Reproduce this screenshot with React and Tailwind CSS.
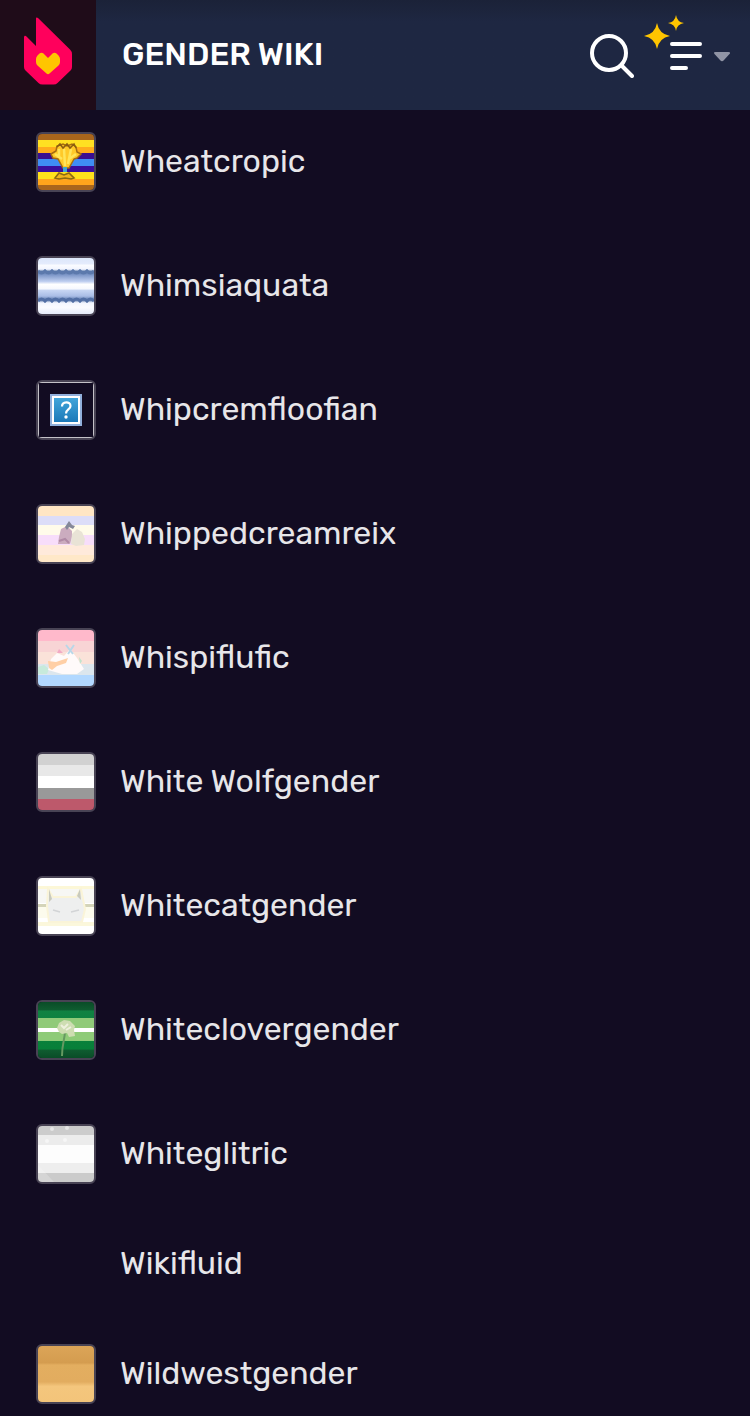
function Stripes({ bands }) {
  return bands.map(([y, height, fill]) => (
    <rect key={y} x="0" y={y} width="56" height={height} fill={fill} />
  ));
}

const scallops = (y, dir) => {
  let d = `M0 ${y}`;
  for (let x = 0; x < 56; x += 7) d += ` q3.5 ${dir * 4} 7 0`;
  return d;
};

const soft = "blur-[0.5px]";

const art = {
  wheat: (
    <>
      <Stripes
        bands={[
          [0, 6, "#a9661c"], [6, 7, "#ffe022"], [13, 6, "#ffac1c"], [19, 6, "#3a0e90"], [25, 7, "#3f8df5"],
          [32, 6, "#3a0e9c"], [38, 7, "#ffe11c"], [45, 6, "#ffa51c"], [51, 5, "#a9661c"],
        ]}
      />
      <g className={soft}>
        <path d="M13 20l5-3 1-5 6-2 4 2 5-2 4 3 1 5 4 2-4 4-3 1-5 9h-6l-5-9-5-1z" fill="#ffc928" stroke="#a56c10" strokeWidth="1.5" />
        <path d="M21 15v9M26 15l1 17M33 15l-3 15M17 20l7 5M38 20l-7 5" stroke="#ffe45a" strokeWidth="2.5" fill="none" />
        <path d="M19 13l3-3 3 4 4-4 3 4 4-4 2 4" stroke="#8a5c10" strokeWidth="1.5" fill="none" />
        <path d="M27 33v5" stroke="#3fa5d0" strokeWidth="4" />
        <path d="M17 44l4-5 5 2 5-2 5 5-3 1-6-1-6 1z" fill="#efb41c" stroke="#8a6a10" strokeWidth="1.6" />
      </g>
    </>
  ),
  aqua: (
    <>
      <defs>
        <linearGradient id="aqua" x2="0" y2="1">
          <stop offset="0" stopColor="#dce6fa" /><stop offset=".1" stopColor="#e4ebfc" /><stop offset=".13" stopColor="#fafbff" /><stop offset=".2" stopColor="#f2f5ff" />
          <stop offset=".24" stopColor="#5a79ac" /><stop offset=".31" stopColor="#829bcb" /><stop offset=".42" stopColor="#c0cff0" />
          <stop offset=".47" stopColor="#ffffff" /><stop offset=".55" stopColor="#f6f8fe" /><stop offset=".58" stopColor="#c6d5f3" />
          <stop offset=".68" stopColor="#a9bde6" /><stop offset=".75" stopColor="#5573a7" /><stop offset=".8" stopColor="#f2f5ff" />
          <stop offset=".88" stopColor="#fafbff" /><stop offset="1" stopColor="#e6ecfb" />
        </linearGradient>
      </defs>
      <rect width="56" height="56" fill="url(#aqua)" />
      <g className={soft} fill="none">
        <path d={scallops(13, 1)} stroke="#5c79ac" strokeWidth="3" />
        <path d={scallops(43, -1)} stroke="#526fa5" strokeWidth="3" />
      </g>
    </>
  ),
  missing: (
    <>
      <defs><linearGradient id="missing" x2="0" y2="1"><stop stopColor="#41a5da" /><stop offset="1" stopColor="#1c79b8" /></linearGradient></defs>
      <rect width="56" height="56" fill="#120c22" />
      <rect x=".5" y=".5" width="55" height="55" fill="none" stroke="#c4c2c8" />
      <rect x="12" y="12" width="32" height="32" fill="#91b0dc" />
      <rect x="14" y="14" width="28" height="28" fill="#fff" />
      <rect x="16" y="16" width="24" height="24" fill="url(#missing)" />
      <path d="M24 24.500c0-5.500 8.500-5.500 8.500-0.500 0 3.500-4.500 3.500-4.500 7.500" fill="none" stroke="#fff" strokeWidth="2.2" />
      <circle cx="28" cy="35" r="1.700" fill="#fff" />
    </>
  ),
  cream: (
    <>
      <Stripes bands={[[0, 10, "#ffe6c4"], [10, 9, "#dcddf8"], [19, 10, "#fffbea"], [29, 10, "#f7ddfa"], [39, 10, "#ffeadb"], [49, 7, "#ffe8c8"]]} />
      <g className={soft}>
        <path d="M20 38l1-7 2-8 6-3 5 5v6l-2 7z" fill="#cbacbf" />
        <path d="M33 38l1-10 5-5 5 3 3 7-1 6-8 1z" fill="#e9e3d6" />
        <path d="M27 21l4-6 3 4 3 1-2 3-4-2-2 3z" fill="#858899" />
        <path d="M21 35l6-2 4 4" stroke="#b08aa6" fill="none" strokeWidth="2" />
      </g>
    </>
  ),
  fluff: (
    <>
      <Stripes bands={[[0, 11, "#ffb9cb"], [11, 11, "#f8d4d5"], [22, 12, "#fae2d9"], [34, 11, "#dce6ed"], [45, 11, "#b2d8ff"]]} />
      <g className={soft}>
        <path d="M0 37l6-2 5 4-2 5H0z" fill="#c7eadb" />
        <path d="M10 40l3-11 6-6 7 3 6-7 7 9 7 11-7 5H24z" fill="#fffafa" />
        <path d="M10 31l8 1 12-4-2 5-9 3-5 4-3-2z" fill="#ffcfa6" />
        <path d="M19 23l2-4 4 4z" fill="#f2aac5" />
        <path d="M28 15l7 9M36 15l-6 9" stroke="#b9d7e8" strokeWidth="2" />
        <path d="M41 27l3 4-2 3" fill="#bfe3cd" />
      </g>
    </>
  ),
  wolf: <Stripes bands={[[0, 11, "#d1d1d1"], [11, 11, "#e8e8e8"], [22, 12, "#ffffff"], [34, 11, "#999999"], [45, 11, "#bd596b"]]} />,
  cat: (
    <>
      <Stripes bands={[[0, 8, "#ffffff"], [8, 3, "#fcf7d7"], [11, 14, "#f7f7f4"], [25, 1, "#fff"], [26, 3, "#d4d4b9"], [29, 11, "#fcfbed"], [40, 4, "#fff"], [44, 4, "#fbf7db"], [48, 8, "#fff"]]} />
      <g className={soft}>
        <path d="M10 11l5 8h23l5-8 4 20-3 13H11L9 28z" fill="#eeefef" stroke="#faf4d8" strokeWidth="2" />
        <path d="M11 11l3 10-3 3zM42 11l-3 7 4 4z" fill="#c9cabd" />
        <path d="M15 32l7 2M33 34l8-2" stroke="#d2d4d6" strokeWidth="1.500" />
      </g>
    </>
  ),
  clover: (
    <>
      <defs><linearGradient id="meadow" x2="0" y2="1"><stop stopColor="#0a4c27" /><stop offset=".14" stopColor="#0f5c30" /><stop offset=".16" stopColor="#108242" /><stop offset=".84" stopColor="#078039" /><stop offset=".86" stopColor="#0f5c30" /><stop offset="1" stopColor="#0a4c27" /></linearGradient></defs>
      <rect width="56" height="56" fill="url(#meadow)" />
      <Stripes bands={[[16, 10, "#90ca79"], [26, 4, "#fff"], [30, 9, "#8ecb78"]]} />
      <g className={soft}>
        <path d="M27 29c0 8-3 12-3 25" stroke="#669961" strokeWidth="2" fill="none" />
        <path d="M19 26l2-5 5-3 6 1 5 5-1 4 1 6-6 1-2-4-5 1-3-2z" fill="#ceddb2" />
        <path d="M23 23l3 3 4-4M28 28l5-3" stroke="#eef0dd" strokeWidth="2" fill="none" />
      </g>
    </>
  ),
  glitter: (
    <>
      <Stripes bands={[[0, 9, "#cccccc"], [9, 10, "#ececec"], [19, 18, "#fdfdfd"], [37, 10, "#eeeeee"], [47, 9, "#cbcbcb"]]} />
      <g fill="#fff" opacity=".5" className={soft}><circle cx="14" cy="3" r="2" /><circle cx="29" cy="2" r="2" /><circle cx="9" cy="15" r="2" /><circle cx="27" cy="14" r="2" /><path d="M0 39l16 17H0z" opacity=".4" /></g>
    </>
  ),
  west: (
    <>
      <defs><linearGradient id="west" x2="0" y2="1"><stop stopColor="#dca558" /><stop offset=".3" stopColor="#d49c4f" /><stop offset=".34" stopColor="#e3ae60" /><stop offset=".64" stopColor="#e2ac5f" /><stop offset=".72" stopColor="#f4c67d" /><stop offset="1" stopColor="#f3c47a" /></linearGradient></defs>
      <rect width="56" height="56" fill="url(#west)" />
    </>
  ),
};

const entries = [
  ["Wheatcropic", "wheat"],
  ["Whimsiaquata", "aqua"],
  ["Whipcremfloofian", "missing"],
  ["Whippedcreamreix", "cream"],
  ["Whispiflufic", "fluff"],
  ["White Wolfgender", "wolf"],
  ["Whitecatgender", "cat"],
  ["Whiteclovergender", "clover"],
  ["Whiteglitric", "glitter"],
  ["Wikifluid", null],
  ["Wildwestgender", "west"],
];

function Header() {
  return (
    <header className="flex h-[110px] items-stretch bg-linear-to-b from-[#1b2238] to-[#1e2742] to-20%">
      <a href="#fandom" aria-label="Fandom home" className="flex w-24 shrink-0 justify-center bg-[#1f0c19] pt-4">
        <svg width="48" height="70" viewBox="0 0 48 70" aria-hidden="true">
          <path d="M12 2.500C12 1.500 13 1 14 2l32 31.500q2 2 2 4.500v13q0 2-1.500 3.500L33.500 67q-1.500 1.500-4 1.500h-11q-2.500 0-4-1.500L1.500 54.500Q0 53 0 51V21.500c0-2 1.500-2 2.500-1L12 30z" fill="#ff005c" />
          <path d="M13.500 39.500l2-2q2-1.700 4 0L24 42l4.500-4.500q2-1.700 4 0l2 2q1.500 1.500 1.500 3.500v3q0 2-1.500 3.500L25.500 57.500q-1.500 1.500-3 0L13.500 49.500Q12 48 12 46v-3q0-2 1.500-3.500z" fill="#ffc500" />
        </svg>
      </a>
      <a href="#wiki" className="flex min-w-0 grow items-center pb-0.5 pl-[26px] text-[32px] leading-10 font-medium whitespace-nowrap text-white">
        GENDER WIKI
      </a>
      <div className="flex shrink-0 items-center gap-2.5 pt-0.5 pr-5">
        <button type="button" aria-label="Search">
          <svg width="44" height="44" viewBox="0 0 44 44" fill="none" stroke="#fff" strokeWidth="4" strokeLinecap="round" aria-hidden="true">
            <circle cx="19" cy="19" r="17" />
            <path d="M31.500 31.500l10.500 10.500" />
          </svg>
        </button>
        <button type="button" aria-label="Menu">
          <svg width="86" height="84" viewBox="0 0 86 84" aria-hidden="true">
            <path d="M13 9q2 11 13 13q-11 2-13 13q-2-11-13-13q11-2 13-13zM32 1q1 7 8 8q-7 1-8 8q-1-7-8-8q7-1 8-8z" fill="#ffc500" />
            <path d="M28 30h28M28 42h28M28 54h14" stroke="#fff" strokeWidth="4" strokeLinecap="round" />
            <path d="M71.500 38h13q2.500 0 1 2l-5.500 6q-2 2.500-4 0l-5.500-6q-1.500-2 1-2z" fill="#9094a5" />
          </svg>
        </button>
      </div>
    </header>
  );
}

export default function App() {
  return (
    <div className="min-h-screen bg-[#120c22] font-['Rubik','Inter',sans-serif]">
      <Header />
      <main>
        <ul className="flex flex-col gap-16 px-9 pt-[22px] pb-3">
          {entries.map(([name, picture]) => (
            <li key={name} className="flex items-center gap-6">
              <div className="w-[60px] shrink-0">
                {picture && (
                  <div className="h-[60px] overflow-hidden rounded-md border-2 border-[#484354]">
                    <svg viewBox="0 0 56 56" className="size-14" aria-hidden="true">{art[picture]}</svg>
                  </div>
                )}
              </div>
              <a href={`#${name.replace(" ", "_")}`} className="pb-0.5 text-[32px] leading-[30px] text-[#e7e6e9]">{name}</a>
            </li>
          ))}
        </ul>
      </main>
    </div>
  );
}
